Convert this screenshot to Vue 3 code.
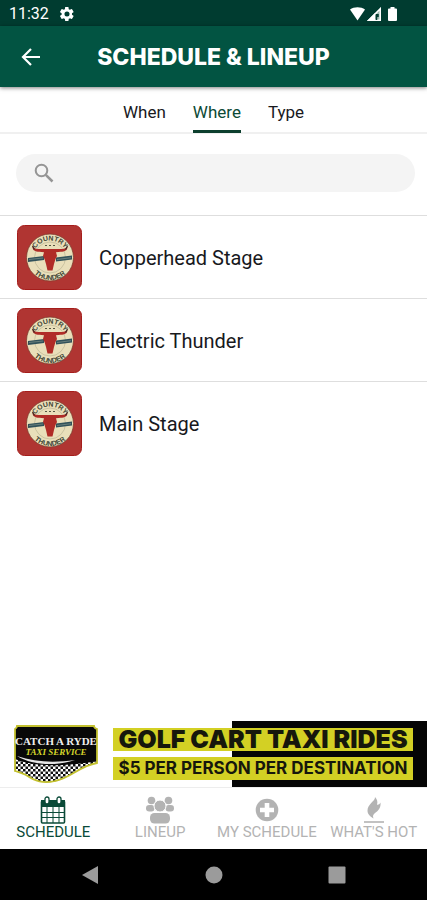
<script setup>
import { ref, computed } from 'vue'

const tabs = ['When', 'Where', 'Type']
const activeTab = ref('Where')
const query = ref('')
const stages = ['Copperhead Stage', 'Electric Thunder', 'Main Stage']
const shown = computed(() =>
  stages.filter((s) => s.toLowerCase().includes(query.value.trim().toLowerCase()))
)
</script>

<template>
  <div class="screen">
    <div class="status">
      <span class="clock">11:32</span>
      <svg class="gear" viewBox="0 0 24 24" aria-hidden="true">
        <path
          fill="#fff"
          fill-rule="evenodd"
          d="M19.4 13c.1-.3.1-.7.1-1s0-.7-.1-1l2.300-1.700c.2-.2.3-.5.1-.7l-2.200-3.700c-.1-.3-.4-.3-.6-.3l-2.700 1.100c-.5-.4-1.100-.8-1.700-1L14.200 1.900c0-.3-.3-.4-.5-.4h-4c-.3 0-.5.100-.5.400L8.800 4.700c-.6.200-1.200.6-1.700 1L4.400 4.600c-.2 0-.5 0-.6.300L1.600 8.600c-.1.200-.1.500.1.700L4 11c0 .3-.1.700-.1 1s0 .7.100 1l-2.300 1.700c-.2.200-.3.500-.1.700l2.200 3.700c.1.300.4.300.6.300l2.700-1.100c.5.400 1.100.8 1.700 1l.4 2.800c0 .3.200.4.500.4h4c.3 0 .5-.1.500-.4l.4-2.800c.6-.2 1.200-.6 1.700-1l2.700 1.100c.2 0 .5 0 .6-.3l2.200-3.700c.1-.2.100-.5-.1-.7zM12 15.800a3.800 3.800 0 1 1 0-7.600 3.800 3.800 0 0 1 0 7.600z"
        />
      </svg>
      <svg class="signals" viewBox="0 0 50 16" aria-hidden="true">
        <path d="M1 3.500C5 .4 12 .4 16 3.500L8.500 14.500z" fill="#fff" />
        <path d="M32 1V15H18z" fill="#9fb8b0" />
        <path d="M26 7v8h-8z" fill="#fff" />
        <path d="M32 1V15H18zM30.500 4.500L22 13.500h8.500z" fill="#fff" fill-rule="evenodd" />
        <path d="M27.500 8v6M29 8v3" stroke="#003c30" stroke-width="1.500" />
        <path d="M41.500 1h4v1.500H47q1 0 1 1V14q0 1-1 1h-7q-1 0-1-1V3.500q0-1 1-1h1.500z" fill="#fff" />
      </svg>
    </div>

    <header class="bar">
      <button class="back" type="button" aria-label="Back">
        <svg viewBox="0 0 20 20" aria-hidden="true">
          <path d="M10 2L2 10l8 8M2.500 10H19" fill="none" stroke="#fff" stroke-width="2.200" />
        </svg>
      </button>
      <h1>SCHEDULE &amp; LINEUP</h1>
    </header>

    <nav class="tabs" aria-label="Group by">
      <button
        v-for="t in tabs"
        :key="t"
        type="button"
        class="tab"
        :class="{ on: t === activeTab }"
        @click="activeTab = t"
      >{{ t }}</button>
    </nav>

    <main>
      <div class="searchwrap">
        <label class="search">
          <svg viewBox="0 0 20 20" aria-hidden="true">
            <circle cx="7.500" cy="7.500" r="5.800" fill="none" stroke="#959595" stroke-width="2" />
            <path d="M11.800 11.800L18.500 18.500" stroke="#959595" stroke-width="2.500" />
          </svg>
          <input v-model="query" type="search" aria-label="Search" />
        </label>
      </div>

      <ul class="list">
        <li v-for="(s, i) in shown" :key="s">
          <a href="#" class="row">
            <svg class="thumb" viewBox="0 0 65 65" aria-hidden="true">
              <rect x=".5" y=".5" width="64" height="64" rx="7" fill="#b03532" stroke="#a51d1b" />
              <circle cx="33" cy="32.500" r="23.500" fill="#e9dfba" stroke="#7d3a2c" stroke-width=".8" />
              <circle cx="33" cy="32.500" r="15.500" fill="none" stroke="#b5b08e" stroke-width=".6" />
              <path :id="'top' + i" d="M16 32.500a17 17 0 0 1 34 0" fill="none" />
              <path :id="'low' + i" d="M10.500 32.500a22.500 22.500 0 0 0 45 0" fill="none" />
              <text class="ring"><textPath :href="'#top' + i" startOffset="50%">COUNTRY</textPath></text>
              <text class="ring"><textPath :href="'#low' + i" startOffset="50%">THUNDER</textPath></text>
              <path d="M28 20.500h2M32 20.500h2M36 20.500h2" stroke="#555743" stroke-width="1.200" />
              <path d="M11 33l16-2v4L11 37zM39 32.500l16-2v4l-16 2z" fill="#31525a" />
              <path d="M12 34.500l14-1.500M40 34.500l14-1.800" stroke="#82948a" stroke-width=".7" />
              <path
                d="M15.500 22c2 1.800 5 2.200 8.500 2h18c3.500.2 6.500-.2 8.500-2 0 3.200-2.500 4.700-7 4.700l-4.500.5 1 3.800-1.500 3-1.500 5-1.500 6.500h-5l-1.500-6.500-1.500-5-1.500-3 1-3.800-4.500-.5c-4.500 0-7-1.500-7-4.700z"
                fill="#b02c27"
              />
              <path d="M15.500 21l2 3.500M50.500 21l-2 3.500" stroke="#3f2b26" stroke-width="1.300" />
            </svg>
            <span>{{ s }}</span>
          </a>
        </li>
      </ul>
    </main>

    <a class="ad" href="#">
      <svg class="adlogo" viewBox="0 0 86 60" aria-hidden="true">
        <defs>
          <pattern id="check" width="5" height="5" patternUnits="userSpaceOnUse">
            <rect width="5" height="5" fill="#fff" />
            <rect width="2.500" height="2.500" fill="#111" />
            <rect x="2.500" y="2.500" width="2.500" height="2.500" fill="#111" />
          </pattern>
          <clipPath id="shield">
            <path d="M4 2H81q0 2 3 3V39C66 42 58 54 42 57 30 60 22 57 13 51 9 49 5 48 2 47V5q2-1 2-3z" />
          </clipPath>
        </defs>
        <g clip-path="url(#shield)">
          <rect width="86" height="60" fill="#080808" />
          <path d="M0 34C20 44 56 42 86 37V60H0z" fill="url(#check)" />
          <path d="M4 32C22 43 48 41 62 36 40 39 22 38 4 32z" fill="#e5e5e5" />
        </g>
        <path
          d="M4 2H81q0 2 3 3V39C66 42 58 54 42 57 30 60 22 57 13 51 9 49 5 48 2 47V5q2-1 2-3z"
          fill="none"
          stroke="#c3c12f"
          stroke-width="1.800"
        />
        <text x="43" y="21" class="l1">CATCH A RYDE</text>
        <text x="43" y="31" class="l2">TAXI SERVICE</text>
      </svg>
      <span class="adtext">
        <strong class="big">GOLF CART TAXI RIDES</strong>
        <strong class="small">$5 PER PERSON PER DESTINATION</strong>
      </span>
    </a>

    <nav class="bottom" aria-label="Main">
      <a href="#" class="item on">
        <svg viewBox="0 0 28 28" aria-hidden="true">
          <rect x="2.500" y="5" width="23" height="22" rx="1" fill="#fff" stroke="currentColor" stroke-width="1.600" />
          <path d="M2 4h24v7H2z" fill="currentColor" />
          <path d="M8 11v16M14 11v16M20 11v16M2 16.500h24M2 21.500h24" stroke="currentColor" stroke-width="1" />
          <rect x="6" y="1" width="4" height="7" rx="2" fill="#fff" stroke="currentColor" stroke-width="1.300" />
          <rect x="18" y="1" width="4" height="7" rx="2" fill="#fff" stroke="currentColor" stroke-width="1.300" />
        </svg>
        <span>SCHEDULE</span>
      </a>
      <a href="#" class="item">
        <svg viewBox="0 0 28 28" aria-hidden="true">
          <g fill="currentColor">
            <circle cx="5.500" cy="4.500" r="3.800" />
            <circle cx="22.500" cy="4.500" r="3.800" />
            <rect x="0" y="9" width="8.500" height="6.500" rx="3.200" />
            <rect x="19.500" y="9" width="8.500" height="6.500" rx="3.200" />
            <rect x="4" y="17" width="20" height="10.500" rx="4.500" />
          </g>
          <circle cx="14" cy="10" r="6" fill="currentColor" stroke="#fff" stroke-width="1" />
        </svg>
        <span>LINEUP</span>
      </a>
      <a href="#" class="item">
        <svg viewBox="0 0 28 28" aria-hidden="true">
          <circle cx="14" cy="14" r="11.300" fill="currentColor" />
          <path d="M14 7v14M7 14h14" stroke="#fff" stroke-width="4.600" />
        </svg>
        <span>MY SCHEDULE</span>
      </a>
      <a href="#" class="item">
        <svg viewBox="0 0 28 28" aria-hidden="true">
          <path
            d="M15 1c.5 4-7.500 7-7.500 13.500 0 4 3 6 6 8-1-2.500-.5-4 1.500-5.500 4-2.800 6-5.500 5.500-10.500-1 2-2.500 2.500-3.500 2C18 6 17 3 15 1z"
            fill="currentColor"
          />
          <path d="M4 26h20" stroke="currentColor" stroke-width="1.600" />
        </svg>
        <span>WHAT'S HOT</span>
      </a>
    </nav>

    <div class="system">
      <button type="button" aria-label="System back">
        <svg viewBox="0 0 18 18" aria-hidden="true"><path d="M17 0v18L1 9z" fill="#9b9b9b" /></svg>
      </button>
      <button type="button" aria-label="Home">
        <svg viewBox="0 0 18 18" aria-hidden="true"><circle cx="9" cy="9" r="8.500" fill="#9b9b9b" /></svg>
      </button>
      <button type="button" aria-label="Recent apps">
        <svg viewBox="0 0 18 18" aria-hidden="true"><rect x=".5" y=".5" width="17" height="17" rx="1" fill="#9b9b9b" /></svg>
      </button>
    </div>
  </div>
</template>

<style>
body {
  margin: 0;
  background: #fff;
}
</style>

<style scoped>
.screen {
  display: flex;
  flex-direction: column;
  min-height: 100vh;
  font-family: Roboto, 'Liberation Sans', sans-serif;
  color: #18191d;
}
svg {
  display: block;
  flex: none;
}
button {
  border: 0;
  padding: 0;
  background: none;
  font: inherit;
  color: inherit;
}
a {
  color: inherit;
  text-decoration: none;
}

.status {
  display: flex;
  align-items: center;
  height: 26px;
  padding: 2px 28px 0 9px;
  box-sizing: border-box;
  background: #003c30;
  color: #fff;
}
.clock {
  font-size: 16px;
  line-height: 20px;
}
.gear {
  width: 16px;
  height: 16px;
  margin-left: 10px;
}
.signals {
  width: 50px;
  height: 16px;
  margin-left: auto;
}

.bar {
  display: grid;
  grid-template-columns: 46px 1fr 46px;
  align-items: center;
  height: 61px;
  padding: 0 8px;
  background: #025442;
  color: #fff;
  box-shadow: 0 1px 4px rgba(0, 0, 0, 0.5);
  z-index: 1;
}
.back {
  display: grid;
  place-items: center;
  height: 46px;
}
.back svg {
  width: 20px;
  height: 20px;
}
h1 {
  margin: 0;
  text-align: center;
  white-space: nowrap;
  font-family: Inter, 'Open Sans', sans-serif;
  font-size: 23px;
  line-height: 28px;
  font-weight: 800;
}

.tabs {
  display: flex;
  justify-content: center;
  gap: 27px;
  height: 45px;
  border-bottom: 2px solid #f0f0f0;
}
.tab {
  margin-bottom: -1px;
  padding-top: 7px;
  border-bottom: 3px solid transparent;
  font-size: 17px;
  line-height: 24px;
}
.tab.on {
  color: #0c4a36;
  border-color: #0c3f2e;
}

main {
  flex: 1;
}
.searchwrap {
  padding: 20px 12px 23px 16px;
}
.search {
  display: flex;
  align-items: center;
  gap: 14px;
  height: 38px;
  padding: 0 18px;
  border-radius: 19px;
  background: #f4f4f4;
}
.search svg {
  width: 20px;
  height: 20px;
}
.search input {
  flex: 1;
  min-width: 0;
  border: 0;
  outline: 0;
  background: none;
  font: inherit;
  font-size: 17px;
}

.list {
  margin: 0;
  padding: 0;
  list-style: none;
}
.row {
  display: flex;
  align-items: center;
  gap: 17px;
  padding: 9px 17px 8px;
  border-top: 1px solid #dedede;
  font-size: 20px;
  line-height: 28px;
}
.thumb {
  width: 65px;
  height: 65px;
}
.ring {
  font-family: 'Liberation Sans', sans-serif;
  font-size: 7px;
  font-weight: 700;
  fill: #3f4636;
  text-anchor: middle;
}

.ad {
  display: flex;
  align-items: center;
  gap: 14px;
  height: 66px;
  padding: 0 14px 0 13px;
  background: linear-gradient(90deg, #fff 54.4%, #050505 54.4%);
}
.adlogo {
  width: 86px;
  height: 60px;
}
.l1 {
  font-family: 'Liberation Serif', serif;
  font-size: 11px;
  font-weight: 700;
  fill: #eee;
  text-anchor: middle;
}
.l2 {
  font-family: 'Liberation Serif', serif;
  font-size: 9px;
  font-weight: 700;
  font-style: italic;
  fill: #d5d52b;
  text-anchor: middle;
}
.adtext {
  flex: 1;
  display: flex;
  flex-direction: column;
  gap: 6px;
  text-align: center;
  white-space: nowrap;
  color: #16170c;
  font-family: Inter, sans-serif;
}
.big,
.small {
  display: block;
  background: #d3d024;
  line-height: 23px;
  font-weight: 900;
}
.big {
  font-size: 25px;
}
.small {
  font-size: 17px;
  font-weight: 700;
}

.bottom {
  display: grid;
  grid-template-columns: repeat(4, 1fr);
  height: 62px;
  border-top: 1px solid #ededed;
  box-sizing: border-box;
  background: #fff;
  color: #b3b3b3;
}
.item {
  display: flex;
  flex-direction: column;
  align-items: center;
  padding-top: 8px;
  white-space: nowrap;
  font-size: 15px;
  line-height: 16px;
}
.item svg {
  width: 28px;
  height: 28px;
}
.item.on {
  color: #0a4a38;
}

.system {
  display: flex;
  justify-content: space-between;
  align-items: center;
  height: 51px;
  padding: 0 81px;
  background: #000;
}
.system svg {
  width: 18px;
  height: 18px;
}
</style>
